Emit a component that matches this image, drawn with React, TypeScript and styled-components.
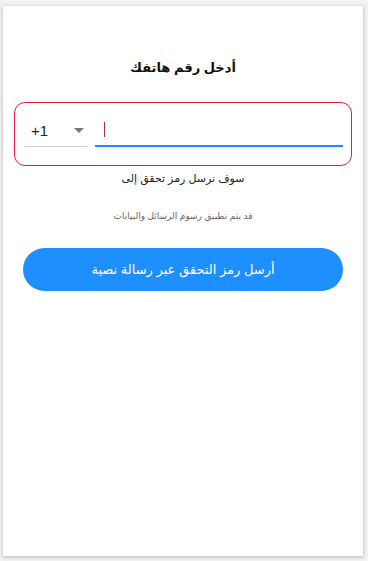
import React from "react";
import styled, { createGlobalStyle } from "styled-components";

const GlobalStyle = createGlobalStyle`
  html, body {
    margin: 0;
    padding: 0;
    background: #f3f3f3;
  }
  body {
    font-family: "Liberation Sans", "DejaVu Sans", Arial, sans-serif;
  }
`;

export default function App() {
  return (
    <>
      <GlobalStyle />
      <Page>
        <Card>
          <Title>أدخل رقم هاتفك</Title>

          <PhoneBox>
            <CountrySelect>
              <Code>+1</Code>
              <Arrow />
            </CountrySelect>
            <Field>
              <PhoneInput type="tel" aria-label="phone" />
              <Caret />
            </Field>
          </PhoneBox>

          <Info>سوف نرسل رمز تحقق إلى</Info>
          <Note>قد يتم تطبيق رسوم الرسائل والبيانات</Note>

          <SendButton>أرسل رمز التحقق عبر رسالة نصية</SendButton>
        </Card>
      </Page>
    </>
  );
}

const Page = styled.div`
  padding: 6px 5px 5px 3px;
`;

const Card = styled.div`
  height: 550px;
  box-sizing: border-box;
  background: #fff;
  box-shadow: 0 1px 4px rgba(0, 0, 0, 0.28);
  padding: 52px 11px 0;
  display: flex;
  flex-direction: column;
`;

const Title = styled.h1`
  margin: 0;
  font-size: 13px;
  line-height: 20px;
  font-weight: bold;
  color: #111;
  text-align: center;
  direction: rtl;
`;

const PhoneBox = styled.div`
  margin-top: 24px;
  height: 64px;
  box-sizing: border-box;
  border: 1px solid #e8193e;
  border-radius: 11px;
  padding: 11px 8px 0 9px;
  display: flex;
  gap: 8px;
`;

const CountrySelect = styled.div`
  width: 63px;
  height: 33px;
  box-sizing: border-box;
  border-bottom: 1px solid #cfcfcf;
  display: flex;
  align-items: center;
  justify-content: space-between;
  padding: 0 3px 0 7px;
`;

const Code = styled.span`
  font-size: 15px;
  color: #222;
`;

const Arrow = styled.span`
  width: 0;
  height: 0;
  border-left: 5px solid transparent;
  border-right: 5px solid transparent;
  border-top: 5px solid #777;
`;

const Field = styled.div`
  position: relative;
  flex: 1;
  height: 33px;
  box-sizing: border-box;
  border-bottom: 2px solid #1a8cff;
`;

const PhoneInput = styled.input`
  width: 100%;
  height: 100%;
  border: none;
  outline: none;
  background: transparent;
  padding: 0 9px;
  box-sizing: border-box;
  font-size: 15px;
  font-family: inherit;
  caret-color: transparent;
`;

const Caret = styled.span`
  position: absolute;
  left: 9px;
  top: 8px;
  width: 1px;
  height: 15px;
  background: #a33;
`;

const Info = styled.p`
  margin: 4px 0 0;
  font-size: 11px;
  line-height: 16px;
  color: #222;
  text-align: center;
  direction: rtl;
`;

const Note = styled.p`
  margin: 23px 0 0;
  font-size: 9px;
  line-height: 14px;
  color: #666;
  text-align: center;
  direction: rtl;
`;

const SendButton = styled.button`
  margin: 25px 9px 0;
  height: 43px;
  border: none;
  border-radius: 22px;
  background: #1e8fff;
  color: #fff;
  font-size: 13px;
  font-family: inherit;
  direction: rtl;
  cursor: pointer;
`;
